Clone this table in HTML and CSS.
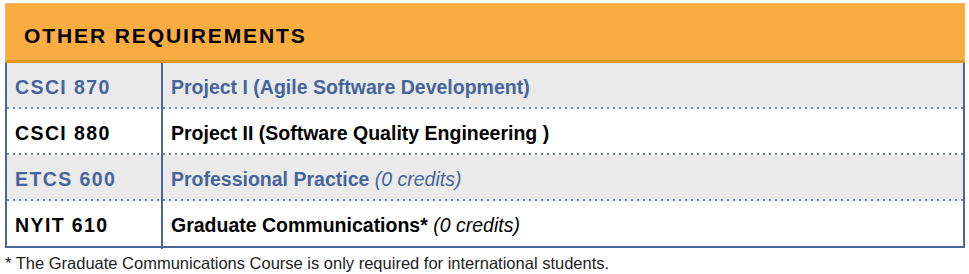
FILE: index.html
```html
<!DOCTYPE html>
<html>
<head>
<meta charset="utf-8">
<link rel="stylesheet" href="styles.css">
</head>
<body>
<div class="wrap">
  <div class="head">OTHER REQUIREMENTS</div>
  <div class="table">
    <div class="row alt">
      <div class="code">CSCI 870</div>
      <div class="title">Project I (Agile Software Development)</div>
    </div>
    <div class="row">
      <div class="code">CSCI 880</div>
      <div class="title">Project II (Software Quality Engineering )</div>
    </div>
    <div class="row alt">
      <div class="code">ETCS 600</div>
      <div class="title">Professional Practice <em>(0 credits)</em></div>
    </div>
    <div class="row last">
      <div class="code">NYIT 610</div>
      <div class="title">Graduate Communications* <em>(0 credits)</em></div>
    </div>
  </div>
  <p class="note">* The Graduate Communications Course is only required for international students.</p>
</div>
</body>
</html>
```
FILE: styles.css
```css
html, body {
  margin: 0;
  padding: 0;
  background: #ffffff;
}
body {
  font-family: "Liberation Sans", Arial, sans-serif;
}
.wrap {
  padding: 3px 4px 0 5px;
  width: 960px;
}
.head {
  height: 53px;
  padding-top: 3px;
  box-sizing: content-box;
  background: #f9ac42;
  border: 1px solid #f1b45a;
  border-bottom: 3px solid #df9612;
  color: #000;
  font-weight: bold;
  font-size: 21px;
  letter-spacing: 1.9px;
  line-height: 58px;
  padding-left: 18px;
}
.table {
  border-left: 2px solid #4b6699;
  border-right: 2px solid #4b6699;
  border-bottom: 2px solid #4b6699;
}
.row {
  display: grid;
  grid-template-columns: 156px 1fr;
  height: 46px;
  background-color: #ffffff;
  background-image: repeating-linear-gradient(to right, #6d86b3 0 2px, transparent 2px 6px);
  background-size: 100% 2px;
  background-position: left bottom;
  background-repeat: no-repeat;
  color: #000;
  font-weight: bold;
  font-size: 19.5px;
}
.row.alt {
  background-color: #eaeaea;
  color: #45649b;
}
.row.last {
  background-image: none;
  height: 45px;
}
.code {
  border-right: 2px solid #4b6699;
  padding-left: 8px;
  line-height: 48px;
  letter-spacing: 1.4px;
}
.title {
  padding-left: 8px;
  line-height: 48px;
}
.title em {
  font-weight: normal;
  font-style: italic;
}
.note {
  margin: 6px 0 0 0;
  font-size: 16.5px;
  color: #222;
}
```
